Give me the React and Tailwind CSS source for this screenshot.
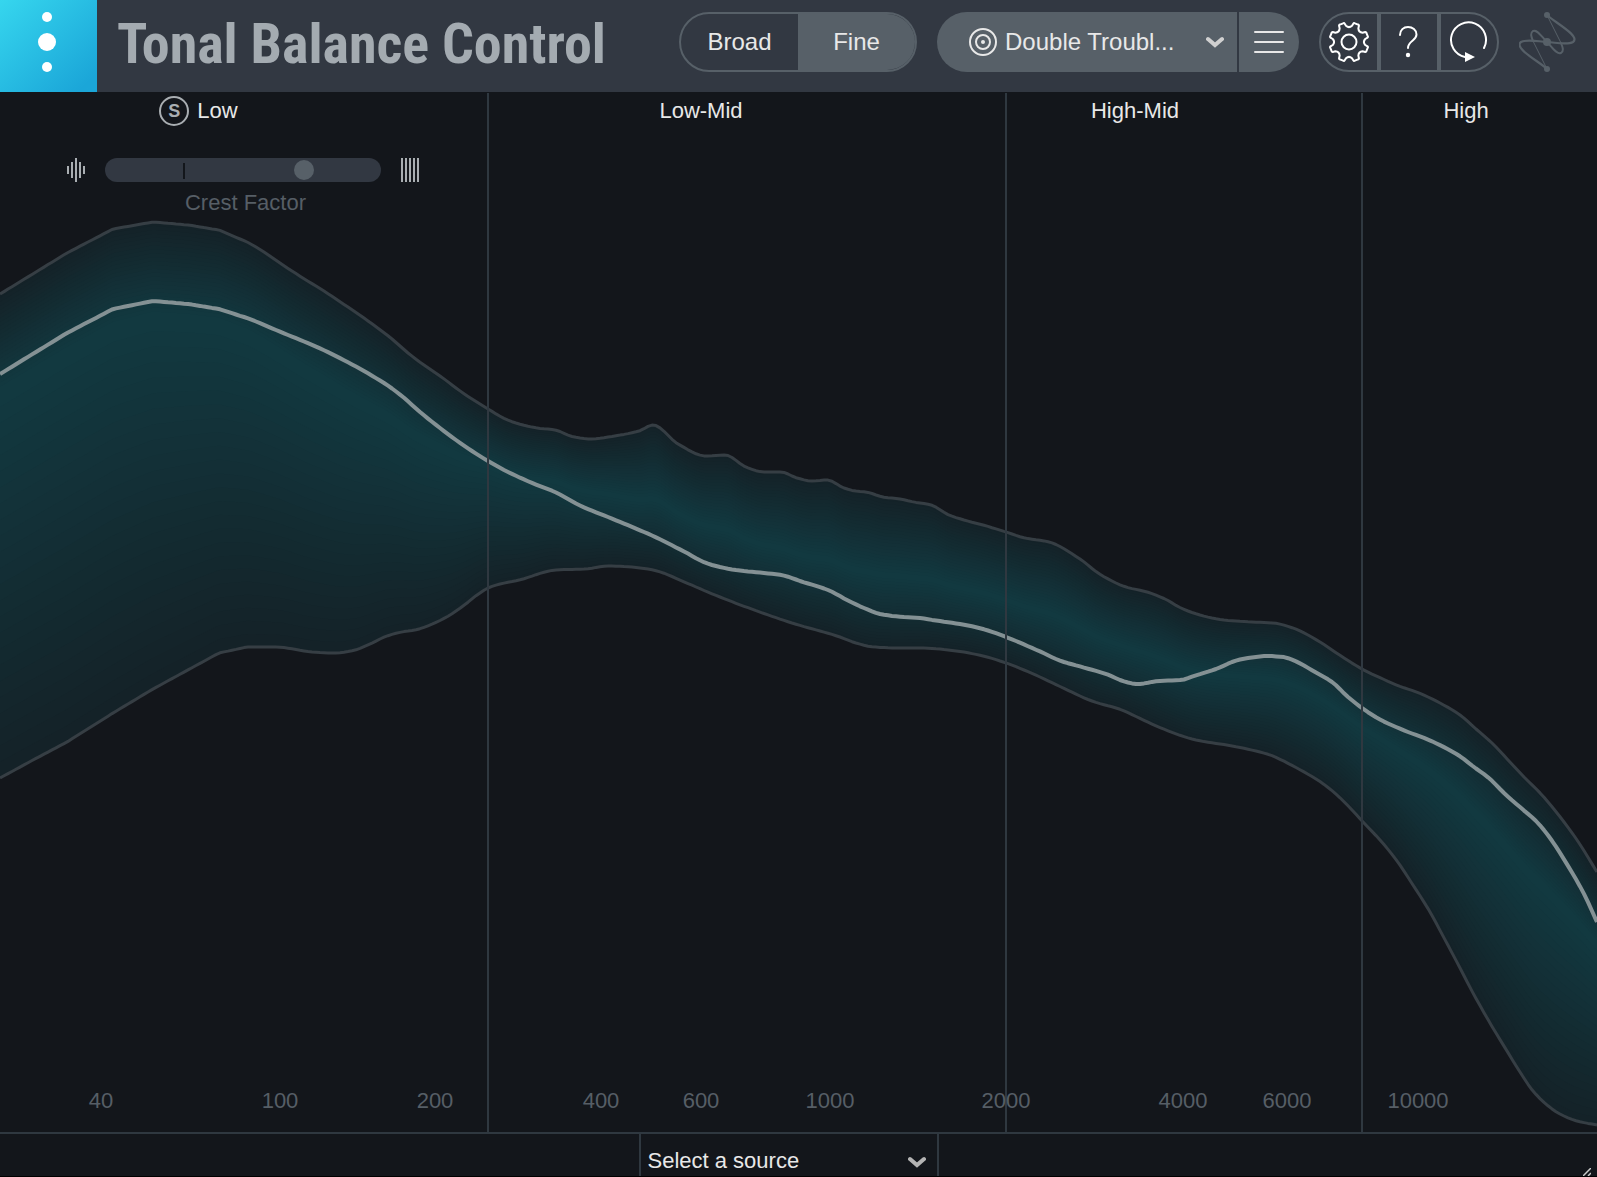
import { useId, useState } from "react";

// Curve points, in chart units (1597 x 1040)
const CHART_W = 1597;
const CHART_H = 1040;

const UPPER = [
    [0, 202], [67, 161], [113, 137], [153, 130], [188, 133], [219, 138], [247, 150], [295, 181],
    [333, 205], [387, 243], [413, 265], [440, 284], [463, 301], [488, 317], [510, 329], [537, 336],
    [555, 338], [574, 345], [592, 347], [608, 345], [639, 339], [653, 333], [678, 352], [706, 364],
    [725, 363], [746, 375], [764, 380], [781, 380], [797, 386], [812, 389], [827, 388], [844, 396],
    [855, 399], [866, 400], [883, 405], [900, 407], [914, 410], [931, 413], [949, 423], [964, 428],
    [983, 433], [1006, 440], [1025, 446], [1049, 450], [1080, 467], [1098, 481], [1114, 490],
    [1126, 495], [1147, 500], [1165, 507], [1181, 516], [1200, 523], [1224, 528], [1252, 530],
    [1273, 531], [1293, 536], [1315, 547], [1338, 562], [1362, 577], [1385, 588], [1399, 594],
    [1419, 601], [1440, 611], [1460, 623], [1476, 637], [1492, 651], [1509, 669], [1525, 686],
    [1541, 702], [1557, 721], [1577, 748], [1597, 780],
];

const TARGET = [
    [0, 282], [67, 241], [113, 217], [153, 209], [188, 212], [219, 217], [247, 226], [283, 241],
    [317, 255], [353, 273], [387, 293], [403, 305], [420, 320], [440, 336], [463, 353], [488, 369],
    [508, 380], [537, 393], [555, 400], [581, 414], [608, 425], [653, 444], [685, 460], [706, 471],
    [720, 475], [735, 478], [764, 481], [781, 483], [803, 490], [828, 498], [849, 509], [864, 516],
    [880, 522], [903, 525], [919, 526], [939, 529], [960, 532], [983, 537], [1006, 545], [1039, 559],
    [1061, 569], [1082, 575], [1106, 582], [1126, 590], [1137, 592], [1159, 589], [1181, 588],
    [1194, 584], [1216, 577], [1238, 568], [1255, 565], [1267, 564], [1283, 565], [1295, 569],
    [1315, 580], [1332, 590], [1348, 605], [1362, 616], [1379, 627], [1403, 638], [1429, 648],
    [1458, 663], [1474, 675], [1490, 687], [1505, 702], [1521, 716], [1537, 730], [1550, 746],
    [1565, 769], [1583, 800], [1597, 830],
];

const LOWER = [
    [0, 686], [33, 668], [67, 650], [113, 621], [153, 597], [219, 561], [247, 555], [275, 555],
    [313, 560], [335, 561], [355, 558], [370, 552], [387, 544], [402, 540], [415, 538], [430, 533],
    [450, 523], [467, 511], [477, 503], [488, 496], [500, 492], [519, 488], [556, 478], [585, 477],
    [608, 474], [631, 475], [653, 478], [689, 492], [710, 501], [746, 515], [792, 531], [837, 544],
    [856, 551], [874, 555], [899, 556], [921, 556], [956, 559], [983, 564], [1006, 571], [1031, 581],
    [1059, 594], [1092, 609], [1122, 618], [1137, 625], [1161, 636], [1196, 648], [1232, 654],
    [1267, 662], [1295, 675], [1322, 691], [1338, 704], [1352, 718], [1362, 729], [1380, 748],
    [1397, 769], [1413, 793], [1430, 820], [1443, 844], [1460, 876], [1473, 901], [1490, 931],
    [1507, 959], [1520, 980], [1533, 999], [1547, 1013], [1560, 1022], [1577, 1029], [1597, 1033],
];

// Where the glow peaks between the upper (0) and lower (1) bounds
const PEAK = [
    [0, 0.2], [153, 0.2], [320, 0.24], [488, 0.31], [580, 0.39], [653, 0.51], [1006, 0.52],
    [1130, 0.48], [1250, 0.43], [1362, 0.38], [1500, 0.3], [1597, 0.28],
];

const STEPS = 24;
const EDGE = [20, 34, 40];
const GLOW = [18, 57, 64];

// Below this x the measured curves are straight between points
const SMOOTH_FROM = 247;

const FREQUENCIES = ["40", "100", "200", "400", "600", "1000", "2000", "4000", "6000", "10000"];

function slope(points, i) {
    return (points[i + 1][1] - points[i][1]) / (points[i + 1][0] - points[i][0]);
}

function tangent(points, i) {
    if (i === 0) return slope(points, 0);
    if (i === points.length - 1) return slope(points, i - 1);
    const a = slope(points, i - 1);
    const b = slope(points, i);
    return a * b <= 0 ? 0 : (2 * a * b) / (a + b);
}

function valueAt(points, x) {
    const i = Math.max(1, points.findIndex((p) => p[0] >= x));
    const [x0, y0] = points[i - 1];
    const [x1, y1] = points[i];
    const h = x1 - x0;
    const t = (x - x0) / h;
    if (x0 < SMOOTH_FROM) return y0 + (y1 - y0) * t;

    const m0 = tangent(points, i - 1) * h;
    const m1 = tangent(points, i) * h;
    return (
        y0 * (2 * t ** 3 - 3 * t ** 2 + 1) +
        m0 * (t ** 3 - 2 * t ** 2 + t) +
        y1 * (3 * t ** 2 - 2 * t ** 3) +
        m1 * (t ** 3 - t ** 2)
    );
}

function toLine(points) {
    return points.map(([x, y]) => `${x},${y.toFixed(1)}`).join(" ");
}

const xs = [];
for (let x = 0; x < CHART_W; x += 4) xs.push(x);
xs.push(CHART_W);

const upper = xs.map((x) => [x, valueAt(UPPER, x)]);
const lower = xs.map((x) => [x, valueAt(LOWER, x)]);
const target = xs.map((x) => [x, valueAt(TARGET, x)]);

// Nested bands, from the outer edge in to the glow
const bands = Array.from({ length: STEPS }, (_, k) => {
    const t = k / STEPS;
    const top = [];
    const bottom = [];
    xs.forEach((x, i) => {
        const u = upper[i][1];
        const l = lower[i][1];
        const peak = u + (l - u) * valueAt(PEAK, x);
        top.push([x, u + (peak - u) * t]);
        bottom.unshift([x, l - (l - peak) * t]);
    });
    const rgb = EDGE.map((c, i) => Math.round(c + ((GLOW[i] - c) * k) / (STEPS - 1)));
    return { points: toLine([...top, ...bottom]), fill: `rgb(${rgb.join(",")})` };
});

function gearPath() {
    const at = (deg, r) => {
        const a = (deg * Math.PI) / 180;
        return `${(22 + r * Math.sin(a)).toFixed(2)} ${(22 - r * Math.cos(a)).toFixed(2)}`;
    };
    let d = "";
    for (let k = 0; k < 8; k++) {
        const c = 22.5 + k * 45;
        d += `${k ? "L" : "M"}${at(c - 12, 16.5)}L${at(c - 9, 19)}Q${at(c - 8, 20)} ${at(c - 5, 19.6)}`;
        d += `L${at(c + 5, 19.6)}Q${at(c + 8, 20)} ${at(c + 9, 19)}L${at(c + 12, 16.5)}`;
        d += `Q${at(c + 22.5, 13.6)} ${at(c + 33, 16.5)}`;
    }
    return d + "Z";
}

function Chevron({ className }) {
    return (
        <svg viewBox="0 0 18 12" className={`pointer-events-none absolute h-3 w-[18px] ${className}`} aria-hidden="true">
            <path d="M2 3L9 9L16 3" fill="none" stroke="currentColor" strokeWidth="4" strokeLinecap="round" />
        </svg>
    );
}

function Header() {
    const [mode, setMode] = useState("Fine");

    return (
        <header className="flex h-[92px] items-center bg-[#323842] pr-[21px] text-[#e8e8e8]">
            <div className="flex h-full w-[97px] shrink-0 items-center justify-center bg-linear-to-br from-[#36d6ee] to-[#1ba6d8] to-90% pr-1 pb-2">
                <svg viewBox="0 0 20 60" className="h-[60px] w-5" fill="#fff" aria-hidden="true">
                    <circle cx="10" cy="5" r="5" />
                    <circle cx="10" cy="30" r="9" />
                    <circle cx="10" cy="55" r="5" />
                </svg>
            </div>
            <h1 className="ml-5 pb-1 font-['Roboto_Condensed',Roboto,sans-serif] text-[56px] leading-[60px] font-bold whitespace-nowrap text-[#a4abb1]">
                Tonal Balance Control
            </h1>

            <div className="ml-auto flex shrink-0 items-center gap-5 pb-2">
                <div className="flex h-[60px] w-[238px] overflow-hidden rounded-full border-2 border-[#576068] text-2xl">
                    {["Broad", "Fine"].map((name) => (
                        <button
                            key={name}
                            type="button"
                            aria-pressed={mode === name}
                            onClick={() => setMode(name)}
                            className={`flex-1 ${mode === name ? "bg-[#576068]" : "bg-transparent"}`}
                        >
                            {name}
                        </button>
                    ))}
                </div>

                <div className="flex h-[60px] gap-0.5 overflow-hidden rounded-full">
                    <div className="relative w-[300px] bg-[#576068]">
                        <svg viewBox="0 0 28 28" className="pointer-events-none absolute top-4 left-8 size-7" fill="none" stroke="currentColor" strokeWidth="2" aria-hidden="true">
                            <circle cx="14" cy="14" r="13" />
                            <circle cx="14" cy="14" r="7" />
                            <circle cx="14" cy="14" r="2" fill="currentColor" stroke="none" />
                        </svg>
                        <select aria-label="Target curve" className="h-full w-full appearance-none pr-10 pl-[68px] text-2xl">
                            <option>Double Troubl...</option>
                        </select>
                        <Chevron className="top-6 right-[13px] text-[#d0d0d0]" />
                    </div>
                    <button type="button" aria-label="Menu" className="flex w-[60px] items-center justify-center bg-[#576068]">
                        <svg viewBox="0 0 30 22" className="h-[22px] w-[30px]" stroke="currentColor" strokeWidth="2" strokeLinecap="round" aria-hidden="true">
                            <path d="M1 1H29M1 11H29M1 21H29" />
                        </svg>
                    </button>
                </div>

                <div className="flex h-[60px] w-[180px] divide-x-4 divide-[#576068] overflow-hidden rounded-full border-2 border-[#576068] text-white">
                    <button type="button" aria-label="Settings" className="flex flex-1 items-center justify-center">
                        <svg viewBox="0 0 44 44" className="size-11" fill="none" stroke="currentColor" strokeWidth="2" strokeLinejoin="round" aria-hidden="true">
                            <path d={gearPath()} />
                            <circle cx="22" cy="22" r="7.5" />
                        </svg>
                    </button>
                    <button type="button" aria-label="Help" className="flex flex-1 items-center justify-center">
                        <svg viewBox="0 0 44 44" className="size-11" fill="none" stroke="currentColor" strokeWidth="2" strokeLinecap="round" aria-hidden="true">
                            <path d="M13 15C13 10 16.500 7 21 7C25.500 7 29.500 10 29.500 14.500C29.500 21 21 20.500 21 28" />
                            <circle cx="21" cy="35" r="2.200" fill="currentColor" stroke="none" />
                        </svg>
                    </button>
                    <button type="button" aria-label="Reset" className="flex flex-1 items-center justify-center">
                        <svg viewBox="0 0 44 44" className="size-11" fill="none" stroke="currentColor" strokeWidth="2" strokeLinecap="round" aria-hidden="true">
                            <path d="M37 28A17.500 17.500 0 1 0 18 37" />
                            <path d="M18 32L28 37L18 42Z" fill="currentColor" stroke="none" />
                        </svg>
                    </button>
                </div>

                <svg viewBox="0 0 57 60" className="h-[60px] w-[57px] text-[#576068]" fill="none" stroke="currentColor" strokeLinecap="round" aria-hidden="true">
                    <path d="M28 3C35 10 62 24 54 30C49 33 40 31 28 30C16 29 7 27 2 30C-6 36 21 50 28 57" strokeWidth="2.200" />
                    <path d="M28 30C34 36 38 43 42 41C45 39 44 36 42 31M28 30C22 24 18 17 14 19C11 21 12 24 14 29" strokeWidth="2" />
                    <path d="M28 3L42 31M28 57L14 29" strokeWidth="1" />
                    <g fill="currentColor" stroke="none">
                        <circle cx="28" cy="3" r="3" />
                        <circle cx="28" cy="30" r="4" />
                        <circle cx="28" cy="57" r="3" />
                    </g>
                </svg>
            </div>
        </header>
    );
}

function CrestFactor() {
    const id = useId();
    const [value, setValue] = useState(74);

    return (
        <div className="mt-8 flex flex-col items-center">
            <div className="flex items-center gap-5 pr-0.5 text-[#a9aeb2]">
                <svg viewBox="0 0 18 24" className="h-6 w-[18px]" stroke="currentColor" strokeWidth="2" aria-hidden="true">
                    <path d="M1 8V16M5 4V20M9 0V24M13 4V20M17 8V16" />
                </svg>
                <div className="relative h-6 w-[276px]">
                    <input
                        id={id}
                        type="range"
                        min="0"
                        max="100"
                        value={value}
                        onChange={(e) => setValue(Number(e.target.value))}
                        className="block h-6 w-full appearance-none rounded-full bg-[#323842] [&::-webkit-slider-thumb]:size-5 [&::-webkit-slider-thumb]:appearance-none [&::-webkit-slider-thumb]:rounded-full [&::-webkit-slider-thumb]:bg-[#576068]"
                    />
                    <span className="pointer-events-none absolute top-[5px] left-[78px] h-4 w-0.5 bg-[#13161b]" />
                </div>
                <svg viewBox="0 0 18 24" className="h-6 w-[18px]" stroke="currentColor" strokeWidth="2" aria-hidden="true">
                    <path d="M1 0V24M5 0V24M9 0V24M13 0V24M17 0V24" />
                </svg>
            </div>
            <label htmlFor={id} className="mt-[7px] pl-1 text-[22px] leading-7 text-[#565e66]">
                Crest Factor
            </label>
        </div>
    );
}

function Spectrum() {
    return (
        <svg
            viewBox={`0 0 ${CHART_W} ${CHART_H}`}
            preserveAspectRatio="none"
            className="absolute inset-0 h-full w-full"
            fill="none"
            strokeLinejoin="round"
            aria-hidden="true"
        >
            {bands.map((band, i) => (
                <polygon key={i} points={band.points} fill={band.fill} />
            ))}
            <polyline points={toLine(upper)} stroke="#363e44" strokeWidth="3" vectorEffect="non-scaling-stroke" />
            <polyline points={toLine(lower)} stroke="#363e44" strokeWidth="3" vectorEffect="non-scaling-stroke" />
            <polyline points={toLine(target)} stroke="#849194" strokeWidth="4" vectorEffect="non-scaling-stroke" />
        </svg>
    );
}

function App() {
    return (
        <main className="relative flex min-h-screen flex-col overflow-hidden border-b border-black bg-[#13161b] font-['Liberation_Sans',Arial,sans-serif]">
            <Header />

            <section className="relative flex flex-1 flex-col">
                <Spectrum />

                <div className="relative grid flex-1 grid-cols-[489fr_518fr_356fr_234fr] pt-px text-[22px] leading-[30px] text-[#e8e8e8]">
                    <div className="border-r-2 border-[#2f3840] pt-[3px]">
                        <div className="flex justify-center gap-2 pr-[90px]">
                            <button
                                type="button"
                                aria-label="Solo low band"
                                className="flex size-[30px] items-center justify-center rounded-full border-2 border-[#a9aeb2] text-lg font-bold text-[#a9aeb2]"
                            >
                                S
                            </button>
                            <h2>Low</h2>
                        </div>
                        <CrestFactor />
                    </div>
                    <h2 className="border-r-2 border-[#2f3840] pt-[3px] pr-[92px] text-center">Low-Mid</h2>
                    <h2 className="border-r-2 border-[#2f3840] pt-[3px] pr-[98px] text-center">High-Mid</h2>
                    <h2 className="pt-[3px] pr-7 text-center">High</h2>
                </div>

                {/* each label is centred on the right edge of its cell */}
                <div className="absolute inset-x-0 bottom-[17px] grid grid-cols-[101fr_179fr_155fr_166fr_100fr_129fr_176fr_177fr_104fr_131fr_179fr] text-[22px] leading-7 text-[#565e66]">
                    {FREQUENCIES.map((freq) => (
                        <div key={freq} className="flex justify-end">
                            <span className="flex w-0 justify-center">{freq}</span>
                        </div>
                    ))}
                </div>
            </section>

            <footer className="flex h-11 justify-center border-t-2 border-[#2f3840] pr-5">
                <div className="relative w-[300px] border-x-2 border-[#2f3840]">
                    <select aria-label="Source" className="h-full w-full appearance-none pt-2.5 pr-10 pl-[7px] text-[22px] text-[#e8e8e8]">
                        <option>Select a source</option>
                    </select>
                    <Chevron className="top-[22px] right-[11px] text-[#b4b4b4]" />
                </div>
                <svg viewBox="0 0 8 8" className="absolute right-1.5 bottom-0 size-2" stroke="#c8c8c8" strokeWidth="1.500" aria-hidden="true">
                    <path d="M0 8L8 0M5 8L8 5" />
                </svg>
            </footer>
        </main>
    );
}

export default App;
